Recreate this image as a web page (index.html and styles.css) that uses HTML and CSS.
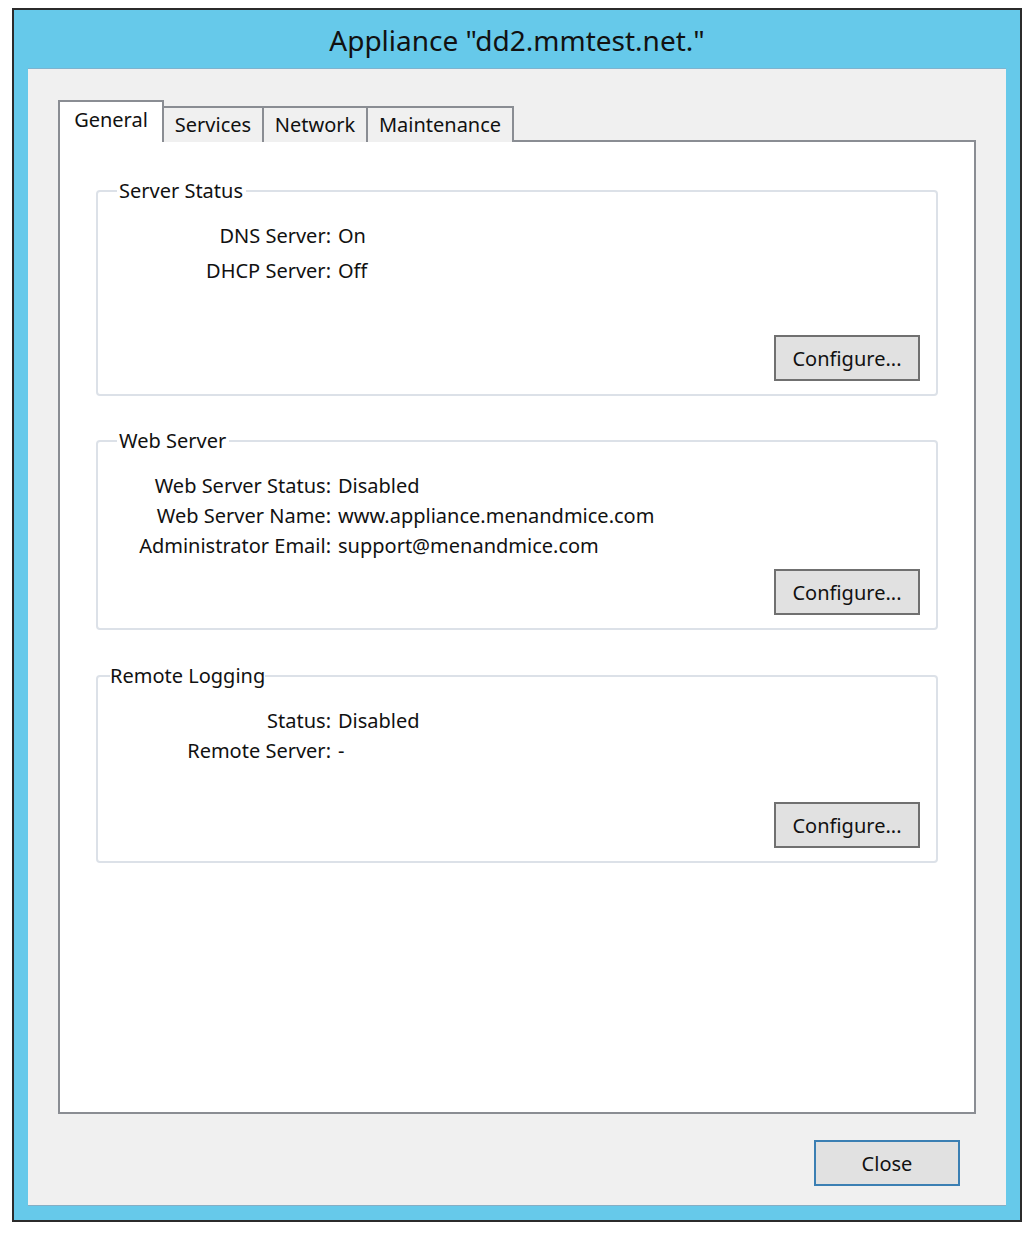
FILE: index.html
```html
<!DOCTYPE html>
<html>
<head>
<meta charset="utf-8">
<link rel="stylesheet" href="styles.css">
</head>
<body>
<div class="window">
  <div class="titlebar">Appliance "dd2.mmtest.net."</div>
  <div class="client">
    <div class="tabs">
      <div class="tab selected t-general">General</div>
      <div class="tab t-services">Services</div>
      <div class="tab t-network">Network</div>
      <div class="tab t-maint">Maintenance</div>
    </div>
    <div class="panel">
      <fieldset class="group g-server">
        <legend>Server Status</legend>
        <div class="gbody">
          <div class="rows rows-wide">
            <div class="lbl">DNS Server:</div><div class="val">On</div>
            <div class="lbl">DHCP Server:</div><div class="val">Off</div>
          </div>
          <div class="btnrow"><button class="btn">Configure...</button></div>
        </div>
      </fieldset>
      <fieldset class="group g-web">
        <legend>Web Server</legend>
        <div class="gbody">
          <div class="rows">
            <div class="lbl">Web Server Status:</div><div class="val">Disabled</div>
            <div class="lbl">Web Server Name:</div><div class="val">www.appliance.menandmice.com</div>
            <div class="lbl">Administrator Email:</div><div class="val">support@menandmice.com</div>
          </div>
          <div class="btnrow"><button class="btn">Configure...</button></div>
        </div>
      </fieldset>
      <fieldset class="group g-remote">
        <legend>Remote Logging</legend>
        <div class="gbody">
          <div class="rows">
            <div class="lbl">Status:</div><div class="val">Disabled</div>
            <div class="lbl">Remote Server:</div><div class="val">-</div>
          </div>
          <div class="btnrow"><button class="btn">Configure...</button></div>
        </div>
      </fieldset>
    </div>
    <div class="footer"><button class="btn btn-default">Close</button></div>
  </div>
</div>
</body>
</html>
```

FILE: styles.css
```css
html, body {
  margin: 0;
  padding: 0;
  background: #ffffff;
}
body {
  font-family: "Noto Sans", "Open Sans", sans-serif;
  font-size: 20px;
  color: #000;
}
.window {
  margin: 8px 0 0 12px;
  width: 1010px;
  height: 1214px;
  box-sizing: border-box;
  border: 2px solid #2b2b2b;
  background: #66c9ea;
  padding: 0 14px 14px 14px;
  display: flex;
  flex-direction: column;
}
.titlebar {
  height: 58px;
  line-height: 60px;
  text-align: center;
  font-size: 28px;
  color: #111;
  flex: none;
}
.client {
  flex: 1;
  background: #f0f0f0;
  border-top: 1px solid #7eb3cf;
  border-bottom: 1px solid #86aec4;
  box-sizing: border-box;
  padding: 31px 30px 0 30px;
  display: flex;
  flex-direction: column;
}
.tabs {
  display: flex;
  align-items: flex-end;
  height: 42px;
  margin-bottom: -2px;
  position: relative;
  z-index: 1;
}
.tab {
  box-sizing: border-box;
  border: 2px solid #8a8d93;
  border-bottom: none;
  background: #f0f0f0;
  height: 36px;
  line-height: 34px;
  text-align: center;
  margin-left: -2px;
  color: #111;
}
.tab.selected {
  background: #ffffff;
  height: 42px;
  line-height: 36px;
  margin-left: 0;
}
.t-general { width: 106px; }
.t-services { width: 102px; }
.t-network { width: 106px; }
.t-maint { width: 148px; }
.panel {
  box-sizing: border-box;
  width: 918px;
  height: 974px;
  border: 2px solid #8a8d93;
  background: #ffffff;
  padding: 37px 36px 0 36px;
  flex: none;
}
.group {
  margin: 0 0 33px 0;
  padding: 0;
  border: 2px solid #dce1e8;
  border-radius: 4px;
  min-width: 0;
}
.group legend {
  margin-left: 19px;
  padding: 0 3px 0 2px;
  line-height: 24px;
  color: #111;
}
.g-remote legend {
  margin-left: 12px;
  padding: 0;
}
.gbody {
  display: flex;
  flex-direction: column;
  padding: 18px 16px 13px 0;
  box-sizing: border-box;
}
.g-server .gbody { height: 191px; }
.g-web { margin-bottom: 34px; }
.g-web .gbody { height: 175px; }
.g-remote .gbody { height: 173px; }
.rows {
  display: grid;
  grid-template-columns: 233px auto;
  grid-auto-rows: 30px;
  line-height: 30px;
  column-gap: 7px;
  justify-content: start;
  color: #111;
}
.rows-wide {
  grid-auto-rows: 35px;
}
.lbl { text-align: right; }
.btnrow {
  margin-top: auto;
  display: flex;
  justify-content: flex-end;
}
.btn {
  width: 146px;
  height: 46px;
  box-sizing: border-box;
  border: 2px solid #707070;
  background: #e1e1e1;
  font-family: "Noto Sans", "Open Sans", sans-serif;
  font-size: 20px;
  color: #111;
  padding: 0;
  border-radius: 0;
}
.btn-default {
  border-color: #3b7fb3;
}
.footer {
  display: flex;
  justify-content: flex-end;
  padding: 26px 16px 0 0;
}
```
